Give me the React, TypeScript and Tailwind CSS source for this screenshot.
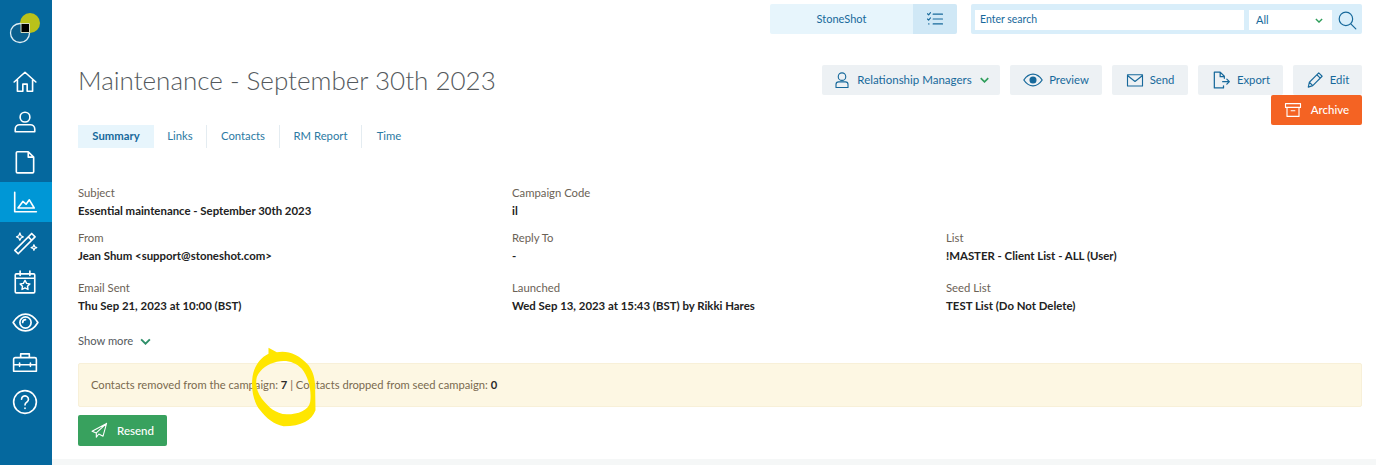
import React from "react";

const Ico = ({ children, cls }: { children: React.ReactNode; cls: string }) => (
  <svg viewBox="0 0 24 24" fill="none" stroke="currentColor" strokeWidth="1.5" strokeLinecap="round" strokeLinejoin="round" className={cls}>
    {children}
  </svg>
);

const Chevron = ({ cls }: { cls: string }) => (
  <svg viewBox="0 0 12 8" fill="none" stroke="currentColor" strokeWidth="2.2" className={cls}>
    <path d="M1 1.500 6 6.500 11 1.500" />
  </svg>
);

const Field = ({ label, value }: { label: string; value: string }) => (
  <div>
    <div className="text-[11.300px] leading-[18px] text-[#6b6256]">{label}</div>
    <div className="text-[11.400px] leading-[18px] font-bold text-[#222222]">{value}</div>
  </div>
);

const ActionBtn = ({ icon, label, cls, extra }: { icon: React.ReactNode; label: string; cls: string; extra?: React.ReactNode }) => (
  <div className={`h-[30px] flex items-center justify-center gap-[6px] bg-[#edf1f4] rounded-[2px] text-[#17699b] ${cls}`}>
    {icon}
    <span>{label}</span>
    {extra}
  </div>
);

const SideItem = ({ children, active }: { children: React.ReactNode; active?: boolean }) => (
  <div className={`h-[40px] flex items-center justify-center pr-[2px] text-white ${active ? "bg-[#0097d6]" : ""}`}>{children}</div>
);

export default function App() {
  return (
    <div className="relative w-[1376px] h-[465px] overflow-hidden flex bg-white font-['Lato','Liberation_Sans',sans-serif]">
      <aside className="w-[52px] shrink-0 bg-[#05689e] flex flex-col">
        <div className="h-[62px] flex items-start pl-[9px] pt-[12px]">
          <svg width="32" height="32" viewBox="0 0 32 32">
            <circle cx="21" cy="11" r="10" fill="#b9c21a" />
            <circle cx="11" cy="21" r="9.500" fill="#0a5f8e" stroke="#dfeef5" strokeWidth="1.300" />
            <path d="M12 11.500h8.500v9H12z" fill="#000" stroke="#d5dbc0" strokeWidth="1" />
          </svg>
        </div>
        <SideItem>
          <Ico cls="w-[26px] h-[26px]">
            <path d="M2 12 12 3l10 9M5 10v10.500h5V14h4v6.500h5V10" />
          </Ico>
        </SideItem>
        <SideItem>
          <Ico cls="w-[26px] h-[26px]">
            <circle cx="12" cy="7.500" r="4.500" />
            <path d="M3 21v-2.500c0-2.500 2-4 4-4h10c2 0 4 1.500 4 4V21z" />
          </Ico>
        </SideItem>
        <SideItem>
          <Ico cls="w-[26px] h-[26px]">
            <path d="M5 2.500h10l5 5V21a1 1 0 0 1-1 1H5a1 1 0 0 1-1-1V3.500a1 1 0 0 1 1-1zM15 2.500v5h5" />
          </Ico>
        </SideItem>
        <SideItem active>
          <Ico cls="w-[26px] h-[26px]">
            <path d="M2.500 3v18h20M5.500 17.500l4.500-6 3 2.500 3-4 4.500 7.500z" />
          </Ico>
        </SideItem>
        <SideItem>
          <Ico cls="w-[27px] h-[27px]">
            <path d="M2.500 19 17.500 4l3 3-15 15zM14.500 7l3 3" />
            <path d="M7 3.500 8 6l2 1-2 1-1 2-1-2-2-1 2-1zM19.500 14l.7 1.800 1.800.7-1.800.7-.7 1.800-.7-1.800-1.800-.7 1.800-.7z" strokeWidth="1.100" />
          </Ico>
        </SideItem>
        <SideItem>
          <Ico cls="w-[26px] h-[26px]">
            <path d="M4 4.500h16a1 1 0 0 1 1 1V21a1 1 0 0 1-1 1H4a1 1 0 0 1-1-1V5.500a1 1 0 0 1 1-1zM3 8.500h18M7.500 2v4M16.500 2v4" />
            <path d="m12 10.500 1.500 2.800 3 .5-2.200 2.100.5 3-2.800-1.400-2.800 1.400.5-3-2.200-2.100 3-.5z" strokeWidth="1.300" />
          </Ico>
        </SideItem>
        <SideItem>
          <Ico cls="w-[27px] h-[27px]">
            <path d="M1 12c3-5 7-7.500 11-7.500S20 7 23 12c-3 5-7 7.500-11 7.500S4 17 1 12z" />
            <circle cx="12" cy="12" r="5" />
            <path d="M9.500 12a2.500 2.500 0 0 1 2.500-2.500" />
          </Ico>
        </SideItem>
        <SideItem>
          <Ico cls="w-[26px] h-[26px]">
            <path d="M3 8h18a1.500 1.500 0 0 1 1.500 1.500V20.500H1.500V9.500A1.500 1.500 0 0 1 3 8zM8 8V4.500h8V8M1.500 14.500h21M7 13v3M17 13v3" />
          </Ico>
        </SideItem>
        <SideItem>
          <Ico cls="w-[26px] h-[26px]">
            <circle cx="12" cy="12" r="10.500" />
            <path d="M8.800 9.500a3.200 3.200 0 1 1 4.800 2.800c-1 .6-1.600 1.200-1.600 2.400" />
            <path d="M12 17.500v.5" />
          </Ico>
        </SideItem>
      </aside>

      <main className="flex-1 flex flex-col min-w-0">
        <header className="h-[30px] mt-[4px] flex justify-end pr-[14px] shrink-0">
          <div className="w-[187px] flex rounded-[2px] overflow-hidden">
            <div className="flex-1 bg-[#e7f5fc] flex items-center justify-center pt-[1px] text-[11px] text-[#17699b]">StoneShot</div>
            <div className="w-[44px] bg-[#d0e8f6] flex items-center justify-center text-[#17699b]">
              <Ico cls="w-[18px] h-[18px]">
                <path d="m2 5 1.500 1.500L6 3.500M2 12l1.500 1.500L6 10.500M9.500 5.500H22M9.500 12H22M9.500 18.500H22M3.500 18.500h.5" />
              </Ico>
            </div>
          </div>
          <div className="w-[391px] ml-[14px] bg-[#d9eefa] rounded-[2px] flex items-center pl-[4px]">
            <div className="w-[269px] h-[20px] mt-[1px] bg-white flex items-center pl-[5px] pt-[1px] text-[10.500px] text-[#17699b]">Enter search</div>
            <div className="w-[83px] h-[20px] mt-[1px] ml-[5px] bg-white flex items-center justify-between pl-[7px] pr-[9px] pt-[1px] text-[11px] text-[#17699b]">
              <span>All</span>
              <Chevron cls="w-[8px] h-[5px] text-[#2f9e5b]" />
            </div>
            <Ico cls="w-[19px] h-[19px] ml-[6px] mt-[2px] text-[#17699b]">
              <circle cx="10" cy="10" r="8.500" />
              <path d="m16.500 16.500 6 6" />
            </Ico>
          </div>
        </header>

        <div className="flex justify-between pl-[26px] pr-[14px] mt-[31px] shrink-0">
          <h1 className="text-[26px] leading-[30px] font-light text-[#54595d]">Maintenance - September 30th 2023</h1>
          <div className="flex flex-col items-end">
            <div className="flex gap-[8px]">
              <ActionBtn
                cls="w-[178px] mr-[2px] text-[11.500px]"
                label="Relationship Managers"
                icon={
                  <Ico cls="w-[18px] h-[18px]">
                    <circle cx="12" cy="7.500" r="5" />
                    <path d="M4 22v-4c0-2 1.500-3.500 3.500-3.500h9c2 0 3.500 1.500 3.500 3.500v4z" />
                  </Ico>
                }
                extra={<Chevron cls="w-[9px] h-[6px] ml-[2px] text-[#2f9e5b]" />}
              />
              <ActionBtn
                cls="w-[92px] mr-[2px] text-[11.300px]"
                label="Preview"
                icon={
                  <Ico cls="w-[20px] h-[20px]">
                    <path d="M1 12c3-4.500 7-7 11-7s8 2.500 11 7c-3 4.500-7 7-11 7s-8-2.500-11-7z" />
                    <circle cx="12" cy="12" r="3.500" fill="currentColor" />
                  </Ico>
                }
              />
              <ActionBtn
                cls="w-[76px] mr-[2px] text-[11.300px]"
                label="Send"
                icon={
                  <Ico cls="w-[18px] h-[18px]">
                    <path d="M2 5h20v15H2zM2 6l10 8 10-8" />
                  </Ico>
                }
              />
              <ActionBtn
                cls="w-[85px] mr-[2px] text-[11.300px]"
                label="Export"
                icon={
                  <Ico cls="w-[20px] h-[20px]">
                    <path d="M14 14h8M19 11l3 3-3 3M15 19v2.500H4V2.500h7l5 5V10M11 2.500V8h5" />
                  </Ico>
                }
              />
              <ActionBtn
                cls="w-[69px] text-[11.300px]"
                label="Edit"
                icon={
                  <Ico cls="w-[18px] h-[18px]">
                    <path d="M3 21.500 4.500 15 17 2.500l4.500 4.500L9 19.500zM14.500 5l4.500 4.500M4.500 15l4.500 4.500" />
                  </Ico>
                }
              />
            </div>
            <div className="w-[91px] h-[30px] bg-[#f46323] rounded-[2px] flex items-center justify-center gap-[9px] text-white text-[11.500px] font-medium">
              <Ico cls="w-[18px] h-[18px]">
                <path d="M2 3.500h20v5H2zM4 8.500v12h16v-12M9.500 13h5" />
              </Ico>
              <span>Archive</span>
            </div>
          </div>
        </div>

        <div className="flex pl-[26px] h-[23px] shrink-0 text-[11.300px] text-[#2c7aa3]">
          <div className="w-[76px] bg-[#e7f5fc] flex items-center justify-center font-bold text-[#17699b]">Summary</div>
          <div className="w-[53px] flex items-center justify-center border-r border-[#e4ecf1]">Links</div>
          <div className="w-[73px] flex items-center justify-center border-r border-[#e4ecf1]">Contacts</div>
          <div className="w-[82px] flex items-center justify-center border-r border-[#e4ecf1]">RM Report</div>
          <div className="w-[54px] flex items-center justify-center">Time</div>
        </div>

        <div className="grid grid-cols-[434px_434px_1fr] pl-[26px] mt-[36px] shrink-0">
          <div className="h-[45px]"><Field label="Subject" value="Essential maintenance - September 30th 2023" /></div>
          <div className="h-[45px]"><Field label="Campaign Code" value="il" /></div>
          <div className="h-[45px]" />
          <div className="h-[50px]"><Field label="From" value="Jean Shum <support@stoneshot.com>" /></div>
          <div className="h-[50px]"><Field label="Reply To" value="-" /></div>
          <div className="h-[50px]"><Field label="List" value="!MASTER - Client List - ALL (User)" /></div>
          <Field label="Email Sent" value="Thu Sep 21, 2023 at 10:00 (BST)" />
          <Field label="Launched" value="Wed Sep 13, 2023 at 15:43 (BST) by Rikki Hares" />
          <Field label="Seed List" value="TEST List (Do Not Delete)" />
        </div>

        <div className="flex items-center gap-[7px] pl-[26px] mt-[17px] h-[18px] text-[11.200px] text-[#54595d] shrink-0">
          <span>Show more</span>
          <Chevron cls="w-[11px] h-[7px] text-[#2f8f6a]" />
        </div>

        <div className="ml-[26px] mr-[14px] mt-[13px] h-[44px] shrink-0 bg-[#fdf7e3] border border-[#f8f0d8] rounded-[2px] flex items-center pl-[12px] text-[11.200px] text-[#7a6a4f]">
          <span>Contacts removed from the campaign:&nbsp;</span>
          <b className="text-[#2a2a2a]">7</b>
          <span>&nbsp;| Contacts dropped from seed campaign:&nbsp;</span>
          <b className="text-[#2a2a2a]">0</b>
        </div>

        <div className="ml-[26px] mt-[8px] w-[89px] h-[31px] shrink-0 bg-[#38a15e] rounded-[2px] flex items-center justify-center gap-[9px] text-white text-[11.500px] font-medium">
          <Ico cls="w-[17px] h-[17px]">
            <path d="M22 2 1.500 13l6 2.500L22 2l-5 18-6-3-3.500 4.500v-6" />
          </Ico>
          <span>Resend</span>
        </div>

        <div className="mt-[13px] flex-1 bg-[#f5f7f7]" />
      </main>

      <svg className="absolute left-[250px] top-[347px] pointer-events-none" width="67" height="80" viewBox="570 50 200 240">
        <path
          fillRule="evenodd"
          fill="#ffe600"
          d="M625 52 650 66C680 60 715 70 745 105 760 125 766 150 765 180L766 240C755 270 725 288 670 288 640 282 620 265 600 240 580 215 574 180 576 150 578 115 595 85 625 70ZM650 94C625 100 600 115 590 140 585 160 590 185 605 205 625 230 645 250 680 252 715 252 745 240 750 215 755 180 745 140 725 115 705 95 680 88 650 94Z"
        />
      </svg>
    </div>
  );
}
